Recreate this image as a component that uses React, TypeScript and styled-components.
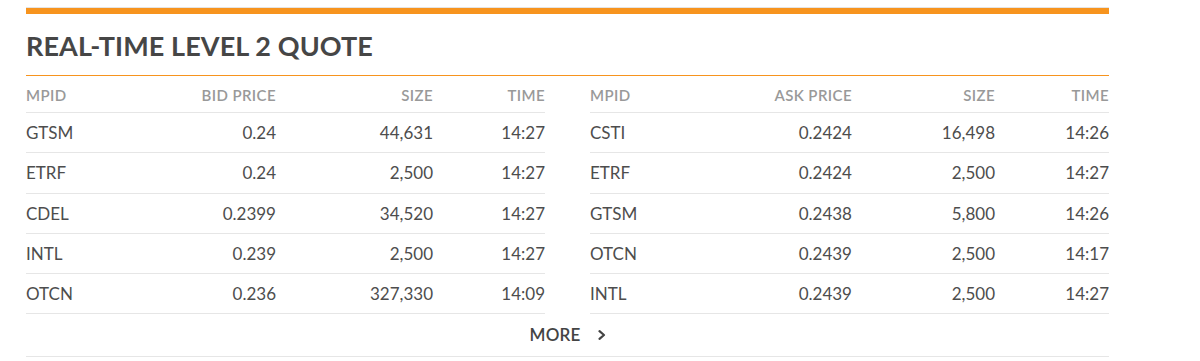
import React from "react";
import styled, { createGlobalStyle } from "styled-components";

const Global = createGlobalStyle`
  html, body { margin: 0; padding: 0; background: #ffffff; }
  body { font-family: Lato, "Open Sans", sans-serif; }
`;

const Panel = styled.section`
  width: 1083px;
  margin: 7px 0 0 26px;
  border-top: 1px solid #e4e4e4;
`;

const Accent = styled.div`
  height: 6px;
  background: #f7941e;
`;

const Title = styled.h2`
  margin: 0;
  height: 62px;
  display: flex;
  align-items: center;
  padding-top: 1px;
  box-sizing: border-box;
  font-size: 27px;
  font-weight: 700;
  color: #464646;
  letter-spacing: 0.1px;
  border-bottom: 1px solid #f7941e;
`;

const Tables = styled.div`
  display: flex;
  gap: 45px;
`;

const Table = styled.div<{ $cols: string }>`
  width: 519px;
  display: grid;
  grid-template-columns: ${(p) => p.$cols};
`;

const HeadCell = styled.div<{ $right?: boolean }>`
  height: 37px;
  display: flex;
  align-items: center;
  justify-content: ${(p) => (p.$right ? "flex-end" : "flex-start")};
  padding-top: 1px;
  box-sizing: border-box;
  font-size: 15px;
  font-weight: 600;
  letter-spacing: 0.4px;
  color: #999999;
  border-bottom: 1px solid #e6e6e6;
`;

const Cell = styled.div<{ $right?: boolean }>`
  height: 39.25px;
  display: flex;
  align-items: center;
  justify-content: ${(p) => (p.$right ? "flex-end" : "flex-start")};
  font-size: 17px;
  color: #4d4d4d;
  border-bottom: 1px solid #e6e6e6;
`;

const MoreRow = styled.div`
  height: 42px;
  display: flex;
  align-items: center;
  justify-content: center;
  border-bottom: 1px solid #e6e6e6;
`;

const MoreLink = styled.a`
  display: flex;
  align-items: center;
  gap: 17px;
  font-size: 17px;
  font-weight: 600;
  letter-spacing: 0.2px;
  color: #444444;
  text-decoration: none;
  padding-bottom: 1px;
`;

type Row = [string, string, string, string];

const bids: Row[] = [
  ["GTSM", "0.24", "44,631", "14:27"],
  ["ETRF", "0.24", "2,500", "14:27"],
  ["CDEL", "0.2399", "34,520", "14:27"],
  ["INTL", "0.239", "2,500", "14:27"],
  ["OTCN", "0.236", "327,330", "14:09"],
];

const asks: Row[] = [
  ["CSTI", "0.2424", "16,498", "14:26"],
  ["ETRF", "0.2424", "2,500", "14:27"],
  ["GTSM", "0.2438", "5,800", "14:26"],
  ["OTCN", "0.2439", "2,500", "14:17"],
  ["INTL", "0.2439", "2,500", "14:27"],
];

function QuoteTable({ cols, heads, rows }: { cols: string; heads: string[]; rows: Row[] }) {
  return (
    <Table $cols={cols}>
      {heads.map((h, i) => (
        <HeadCell key={h + i} $right={i > 0}>
          {h}
        </HeadCell>
      ))}
      {rows.map((r, ri) =>
        r.map((c, ci) => (
          <Cell key={ri + "-" + ci} $right={ci > 0}>
            {c}
          </Cell>
        ))
      )}
    </Table>
  );
}

export default function App() {
  return (
    <>
      <Global />
      <Panel>
        <Accent />
        <Title>REAL-TIME LEVEL 2 QUOTE</Title>
        <Tables>
          <QuoteTable
            cols="125px 125px 157px 112px"
            heads={["MPID", "BID PRICE", "SIZE", "TIME"]}
            rows={bids}
          />
          <QuoteTable
            cols="131px 131px 143px 114px"
            heads={["MPID", "ASK PRICE", "SIZE", "TIME"]}
            rows={asks}
          />
        </Tables>
        <MoreRow>
          <MoreLink href="#">
            MORE
            <svg width="8" height="10" viewBox="0 0 8 10" aria-hidden="true">
              <path d="M1.5 1.2 L6 5 L1.5 8.8" fill="none" stroke="#444" strokeWidth="2.2" strokeLinecap="round" strokeLinejoin="round" />
            </svg>
          </MoreLink>
        </MoreRow>
      </Panel>
    </>
  );
}
